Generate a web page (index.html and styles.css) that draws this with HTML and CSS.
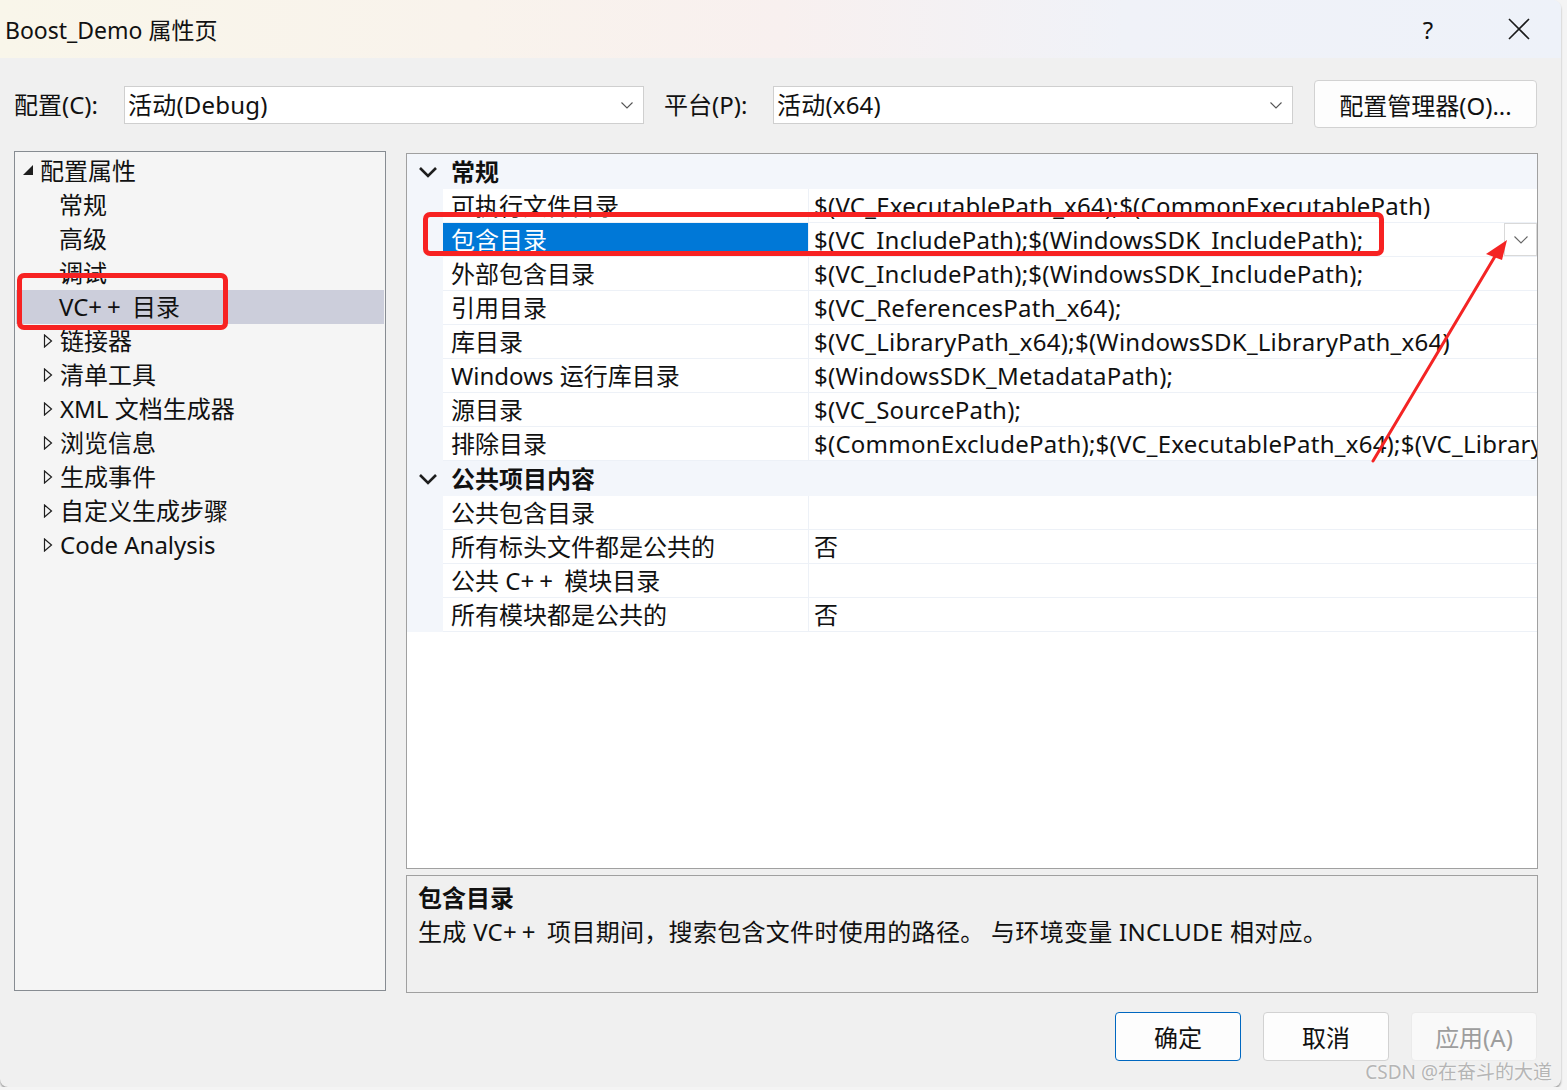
FILE: index.html
```html
<!DOCTYPE html>
<html lang="zh-CN">
<head>
<meta charset="utf-8">
<title>Boost_Demo 属性页</title>
<link rel="stylesheet" href="styles.css">
</head>
<body>
<div class="window">
  <div class="titlebar">
    <span class="title">Boost_Demo 属性页</span>
    <span class="help">?</span>
    <span class="close">
      <svg width="22" height="22" viewBox="0 0 22 22"><path d="M1 1 L21 21 M21 1 L1 21" stroke="#1a1a1a" stroke-width="1.6" fill="none"/></svg>
    </span>
  </div>

  <div class="toolbar">
    <span class="lbl lbl-config">配置(C):</span>
    <div class="combo">
      <span class="combo-text">活动(Debug)</span>
      <svg class="combo-chev" width="12" height="7" viewBox="0 0 12 7"><path d="M0.5 0.5 L6 6 L11.5 0.5" stroke="#555" stroke-width="1.1" fill="none"/></svg>
    </div>
    <span class="lbl lbl-platform">平台(P):</span>
    <div class="combo">
      <span class="combo-text">活动(x64)</span>
      <svg class="combo-chev" width="12" height="7" viewBox="0 0 12 7"><path d="M0.5 0.5 L6 6 L11.5 0.5" stroke="#555" stroke-width="1.1" fill="none"/></svg>
    </div>
    <button class="btn btn-manager">配置管理器(O)...</button>
  </div>

  <div class="main">
    <div class="tree">
      <div class="trow root">
        <span class="twisty"><svg width="12" height="12" viewBox="0 0 12 12"><path d="M11 1 L11 11 L1 11 Z" fill="#1e1e1e"/></svg></span>
        <span>配置属性</span>
      </div>
      <div class="trow leaf"><span>常规</span></div>
      <div class="trow leaf"><span>高级</span></div>
      <div class="trow leaf"><span>调试</span></div>
      <div class="trow leaf selected"><span>VC<span class="pp">++</span> 目录</span></div>
      <div class="trow child">
        <span class="twisty"><svg width="10" height="14" viewBox="0 0 10 14"><path d="M1.5 1 L8.5 7 L1.5 13 Z" fill="none" stroke="#1e1e1e" stroke-width="1.2"/></svg></span>
        <span>链接器</span>
      </div>
      <div class="trow child">
        <span class="twisty"><svg width="10" height="14" viewBox="0 0 10 14"><path d="M1.5 1 L8.5 7 L1.5 13 Z" fill="none" stroke="#1e1e1e" stroke-width="1.2"/></svg></span>
        <span>清单工具</span>
      </div>
      <div class="trow child">
        <span class="twisty"><svg width="10" height="14" viewBox="0 0 10 14"><path d="M1.5 1 L8.5 7 L1.5 13 Z" fill="none" stroke="#1e1e1e" stroke-width="1.2"/></svg></span>
        <span>XML 文档生成器</span>
      </div>
      <div class="trow child">
        <span class="twisty"><svg width="10" height="14" viewBox="0 0 10 14"><path d="M1.5 1 L8.5 7 L1.5 13 Z" fill="none" stroke="#1e1e1e" stroke-width="1.2"/></svg></span>
        <span>浏览信息</span>
      </div>
      <div class="trow child">
        <span class="twisty"><svg width="10" height="14" viewBox="0 0 10 14"><path d="M1.5 1 L8.5 7 L1.5 13 Z" fill="none" stroke="#1e1e1e" stroke-width="1.2"/></svg></span>
        <span>生成事件</span>
      </div>
      <div class="trow child">
        <span class="twisty"><svg width="10" height="14" viewBox="0 0 10 14"><path d="M1.5 1 L8.5 7 L1.5 13 Z" fill="none" stroke="#1e1e1e" stroke-width="1.2"/></svg></span>
        <span>自定义生成步骤</span>
      </div>
      <div class="trow child">
        <span class="twisty"><svg width="10" height="14" viewBox="0 0 10 14"><path d="M1.5 1 L8.5 7 L1.5 13 Z" fill="none" stroke="#1e1e1e" stroke-width="1.2"/></svg></span>
        <span>Code Analysis</span>
      </div>
    </div>

    <div class="right">
      <div class="grid">
        <div class="cat">
          <span class="gut"><svg width="36" height="35" viewBox="0 0 36 35"><path d="M13 14 L21 22 L29 14" stroke="#1e1e1e" stroke-width="2.6" fill="none"/></svg></span>
          <span class="cat-name">常规</span>
        </div>
        <div class="prow"><span class="gut"></span><span class="name">可执行文件目录</span><span class="value"><span>$(VC_ExecutablePath_x64);$(CommonExecutablePath)</span></span></div>
        <div class="prow sel"><span class="gut"></span><span class="name">包含目录</span><span class="value"><span>$(VC_IncludePath);$(WindowsSDK_IncludePath);</span><span class="dd"><svg width="14" height="8" viewBox="0 0 14 8"><path d="M0.5 0.5 L7 7 L13.5 0.5" stroke="#666" stroke-width="1.1" fill="none"/></svg></span></span></div>
        <div class="prow"><span class="gut"></span><span class="name">外部包含目录</span><span class="value"><span>$(VC_IncludePath);$(WindowsSDK_IncludePath);</span></span></div>
        <div class="prow"><span class="gut"></span><span class="name">引用目录</span><span class="value"><span>$(VC_ReferencesPath_x64);</span></span></div>
        <div class="prow"><span class="gut"></span><span class="name">库目录</span><span class="value"><span>$(VC_LibraryPath_x64);$(WindowsSDK_LibraryPath_x64)</span></span></div>
        <div class="prow"><span class="gut"></span><span class="name">Windows 运行库目录</span><span class="value"><span>$(WindowsSDK_MetadataPath);</span></span></div>
        <div class="prow"><span class="gut"></span><span class="name">源目录</span><span class="value"><span>$(VC_SourcePath);</span></span></div>
        <div class="prow"><span class="gut"></span><span class="name">排除目录</span><span class="value"><span>$(CommonExcludePath);$(VC_ExecutablePath_x64);$(VC_Library</span></span></div>
        <div class="cat">
          <span class="gut"><svg width="36" height="35" viewBox="0 0 36 35"><path d="M13 14 L21 22 L29 14" stroke="#1e1e1e" stroke-width="2.6" fill="none"/></svg></span>
          <span class="cat-name">公共项目内容</span>
        </div>
        <div class="prow"><span class="gut"></span><span class="name">公共包含目录</span><span class="value"></span></div>
        <div class="prow"><span class="gut"></span><span class="name">所有标头文件都是公共的</span><span class="value"><span>否</span></span></div>
        <div class="prow"><span class="gut"></span><span class="name">公共 C<span class="pp">++</span> 模块目录</span><span class="value"></span></div>
        <div class="prow"><span class="gut"></span><span class="name">所有模块都是公共的</span><span class="value"><span>否</span></span></div>
      </div>
      <div class="desc">
        <div class="desc-title">包含目录</div>
        <div class="desc-text">生成 VC<span class="pp">++</span> 项目期间，搜索包含文件时使用的路径。 与环境变量 INCLUDE 相对应。</div>
      </div>
    </div>
  </div>

  <div class="footer">
    <button class="btn btn-ok">确定</button>
    <button class="btn">取消</button>
    <button class="btn btn-disabled">应用(A)</button>
  </div>

  <div class="mark mark-tree"></div>
  <div class="mark mark-row"></div>
  <svg class="arrow" width="1567" height="1090" viewBox="0 0 1567 1090">
    <path d="M1373 461 L1497 253" stroke="#f42424" stroke-width="3" fill="none" stroke-linecap="round"/>
    <path d="M1507 240 L1486 254 L1502 260 Z" fill="#f42424"/>
  </svg>
  <div class="watermark">CSDN @在奋斗的大道</div>
</div>
</body>
</html>
```

FILE: styles.css
```css
* { box-sizing: border-box; }

html, body {
  margin: 0;
  padding: 0;
  background: #f4f4f4;
}

body {
  font-family: "Noto Sans", "Noto Sans CJK SC", sans-serif;
  font-size: 24px;
  color: #111;
}

.window {
  position: relative;
  width: 1561px;
  height: 1087px;
  background: #f0f0f0;
  border-radius: 0 8px 8px 8px;
  overflow: hidden;
  box-shadow: 0 2px 2px rgba(0, 0, 0, 0.35);
}

/* title bar */
.titlebar {
  height: 58px;
  display: flex;
  align-items: center;
  padding-left: 5px;
  padding-right: 19px;
  background: linear-gradient(90deg, #f9f6ea 0%, #f9f3ec 30%, #f8f0ef 50%, #f0f2f8 72%, #eef2f9 100%);
}

.title {
  font-size: 23px;
  color: #111;
}

.help {
  margin-left: auto;
  width: 40px;
  text-align: center;
  font-size: 24px;
  color: #111;
}

.close {
  margin-left: 48px;
  width: 46px;
  height: 22px;
  display: flex;
  justify-content: center;
}

/* toolbar */
.toolbar {
  display: flex;
  align-items: flex-start;
  margin-top: 22px;
  padding-left: 14px;
  height: 48px;
}

.lbl {
  margin-top: 6px;
  line-height: 38px;
  color: #111;
}

.lbl-config { width: 110px; }
.lbl-platform { width: 109px; margin-left: 20px; }

.combo {
  margin-top: 6px;
  width: 520px;
  height: 38px;
  background: #fff;
  border: 1px solid #cfcfcf;
  display: flex;
  align-items: center;
  padding-left: 3px;
  padding-right: 10px;
}

.combo-text {
  line-height: 36px;
  letter-spacing: 0.2px;
}

.combo-chev {
  margin-left: auto;
}

.btn {
  font-family: "Noto Sans", "Noto Sans CJK SC", sans-serif;
  font-size: 24px;
  color: #111;
  background: #fdfdfd;
  border: 1px solid #d2d2d2;
  border-radius: 4px;
  padding: 0;
  width: 126px;
  height: 49px;
}

.btn-manager {
  margin-left: 21px;
  width: 223px;
  height: 48px;
}

.pp {
  letter-spacing: 5px;
}

/* main area */
.main {
  display: flex;
  margin-top: 23px;
  padding-left: 14px;
  height: 842px;
}

.tree {
  width: 372px;
  height: 840px;
  background: #f5f5f5;
  border: 1px solid #878c92;
  padding-top: 2px;
}

.trow {
  height: 34px;
  margin: 0 1px;
  display: flex;
  align-items: center;
  line-height: 34px;
  white-space: nowrap;
}

.trow.root { padding-left: 6px; }
.trow.root .twisty { width: 18px; display: flex; align-items: center; margin-top: -2px; }
.trow.leaf { padding-left: 43px; }
.trow.child { padding-left: 27px; }
.trow.child .twisty { width: 17px; display: flex; align-items: center; }
.trow.selected { background: #cccedb; }

.right {
  margin-left: 20px;
  width: 1132px;
  display: flex;
  flex-direction: column;
}

.grid {
  margin-top: 2px;
  height: 716px;
  background: #fff;
  border: 1px solid #a0a0a0;
  overflow: hidden;
}

.cat {
  height: 35px;
  display: flex;
  align-items: center;
  background: #f3f6fb;
}

.cat .gut {
  width: 36px;
  height: 35px;
  display: block;
}

.cat-name {
  padding-left: 8px;
  font-weight: bold;
  line-height: 35px;
}

.prow {
  height: 34px;
  display: flex;
}

.prow .gut {
  width: 36px;
  background: #f3f6fb;
}

.prow .name {
  width: 366px;
  padding-left: 8px;
  line-height: 33px;
  border-bottom: 1px solid #edf1f7;
  border-right: 1px solid #edf1f7;
  white-space: nowrap;
}

.prow .value {
  flex: 1;
  min-width: 0;
  display: flex;
  align-items: center;
  padding-left: 5px;
  line-height: 33px;
  border-bottom: 1px solid #edf1f7;
  white-space: nowrap;
  overflow: hidden;
  letter-spacing: 0.25px;
}

.prow.sel .name {
  background: #0078d7;
  color: #fff;
}

.dd {
  margin-left: auto;
  width: 33px;
  height: 33px;
  background: #fff;
  border: 1px solid #d9d9d9;
  display: flex;
  align-items: center;
  justify-content: center;
  flex-shrink: 0;
}

.desc {
  margin-top: 6px;
  height: 118px;
  border: 1px solid #a0a0a0;
  background: #f0f0f0;
  padding: 5px 11px;
}

.desc-title {
  font-weight: bold;
  line-height: 34px;
}

.desc-text {
  line-height: 34px;
  letter-spacing: 0.3px;
}

/* footer */
.footer {
  display: flex;
  justify-content: flex-end;
  gap: 22px;
  margin-top: 19px;
  padding-right: 24px;
}

.btn-ok {
  border-color: #0067c0;
}

.btn-disabled {
  background: #f9f9f9;
  border-color: #ebebeb;
  color: #9d9d9d;
}

/* annotations */
.mark {
  position: absolute;
  border: 5px solid #f72222;
  border-radius: 7px;
}

.mark-tree {
  left: 17px;
  top: 273px;
  width: 211px;
  height: 57px;
}

.mark-row {
  left: 423px;
  top: 212px;
  width: 961px;
  height: 44px;
}

.arrow {
  position: absolute;
  left: 0;
  top: 0;
  pointer-events: none;
}

.watermark {
  position: absolute;
  right: 9px;
  top: 1057px;
  font-size: 19px;
  color: #b5b5b5;
  text-shadow: 0 0 2px #fff;
  white-space: nowrap;
}
```
